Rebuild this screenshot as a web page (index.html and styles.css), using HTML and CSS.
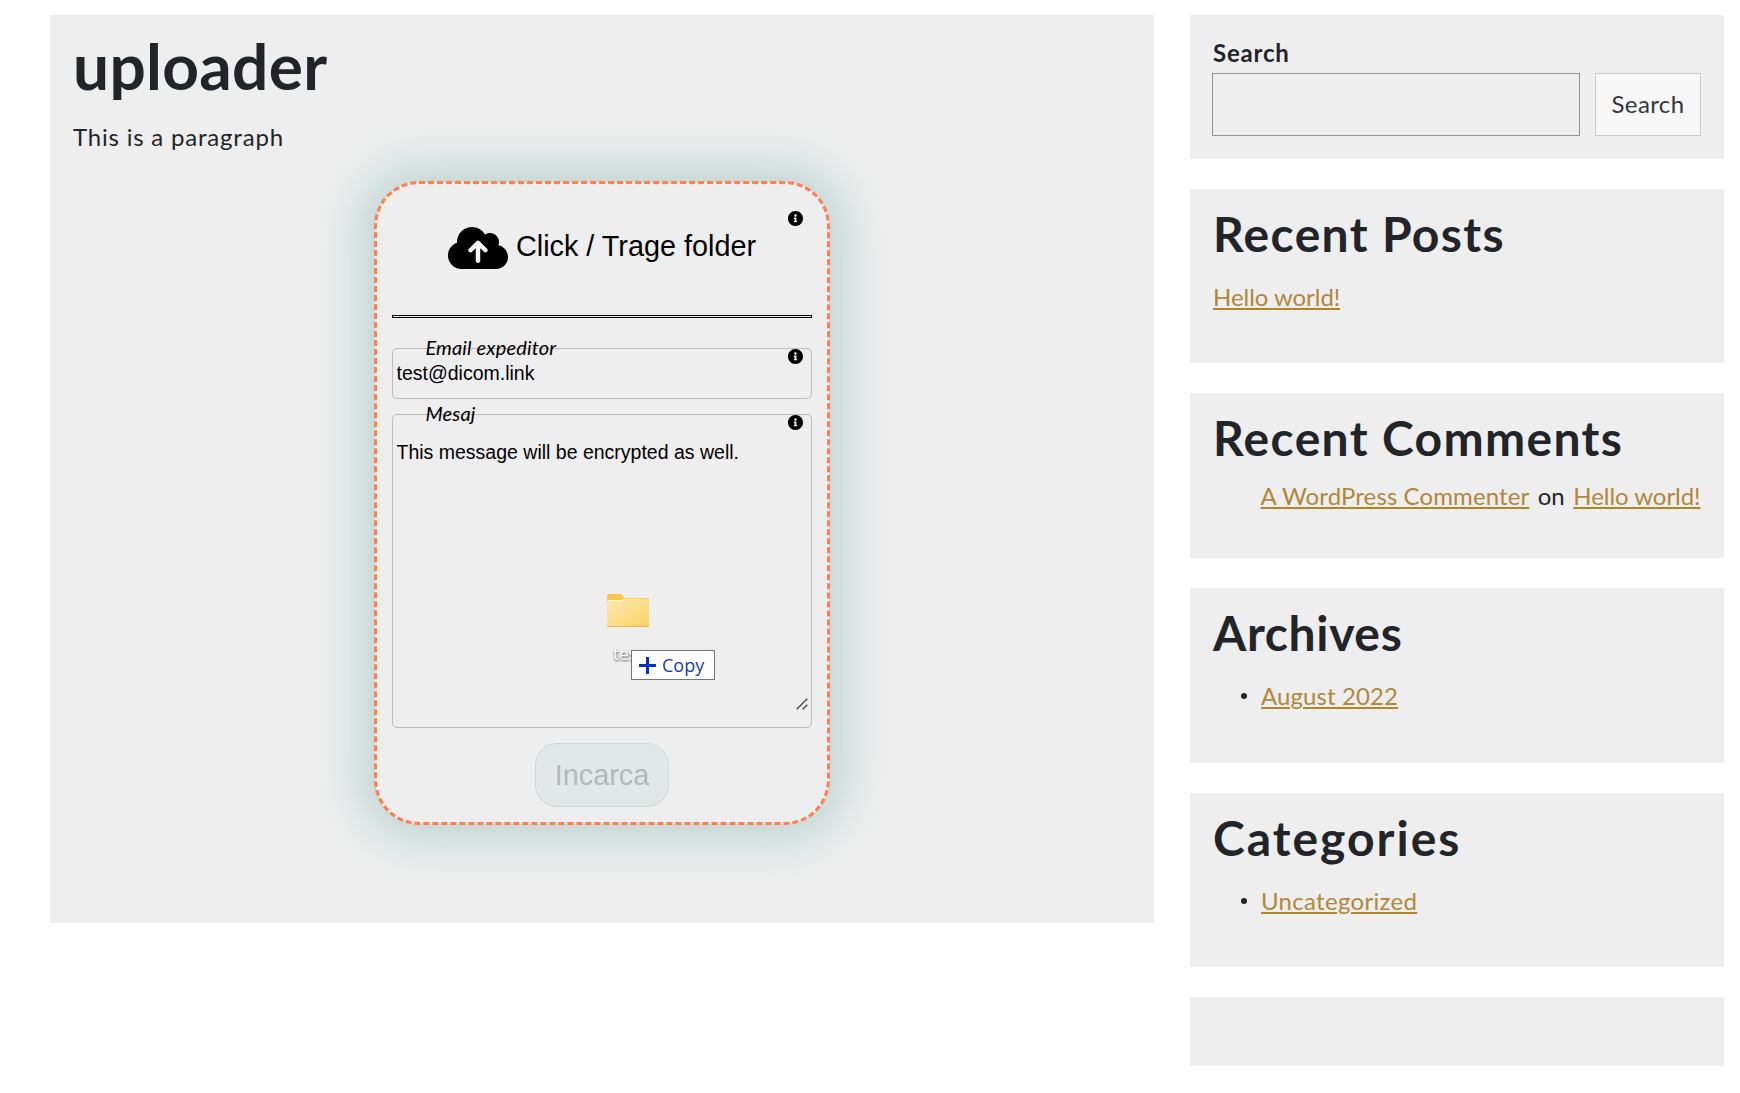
FILE: index.html
```html
<!DOCTYPE html>
<html lang="en">
<head>
<meta charset="utf-8">
<title>uploader</title>
<link rel="stylesheet" href="styles.css">
</head>
<body>
<svg width="0" height="0" class="sprite" aria-hidden="true">
  <symbol id="info" viewBox="8 8 496 496"><path d="M256 8C119.043 8 8 119.083 8 256c0 136.997 111.043 248 248 248s248-111.003 248-248C504 119.083 392.957 8 256 8zm0 110c23.196 0 42 18.804 42 42s-18.804 42-42 42-42-18.804-42-42 18.804-42 42-42zm56 254c0 6.627-5.373 12-12 12h-88c-6.627 0-12-5.373-12-12v-24c0-6.627 5.373-12 12-12h12v-64h-12c-6.627 0-12-5.373-12-12v-24c0-6.627 5.373-12 12-12h64c6.627 0 12 5.373 12 12v100h12c6.627 0 12 5.373 12 12v24z"/></symbol>
</svg>
<div class="page">
  <main class="panel content">
    <h1 class="title">uploader</h1>
    <p class="intro">This is a paragraph</p>

    <form class="uploader">
      <div class="drop">
        <svg class="cloud" viewBox="0 0 640 512"><path class="cloud-arrow" d="M200 160h240v260H200z"/><path d="M144 480C64.5 480 0 415.5 0 336c0-62.8 40.2-116.2 96.2-135.9c-.1-2.7-.2-5.4-.2-8.1c0-88.4 71.6-160 160-160c59.3 0 111 32.2 138.7 80.2C409.9 102 428.3 96 448 96c53 0 96 43 96 96c0 12.2-2.3 23.8-6.4 34.6C596 238.4 640 290.1 640 352c0 70.7-57.3 128-128 128H144zm79-217c-9.4 9.4-9.4 24.6 0 33.9s24.6 9.4 33.9 0l39-39V392c0 13.3 10.7 24 24 24s24-10.7 24-24V257.9l39 39c9.4 9.4 24.6 9.4 33.9 0s9.4-24.6 0-33.9l-80-80c-9.4-9.4-24.6-9.4-33.9 0l-80 80z"/></svg>
        <span class="drop-text">Click / Trage folder</span>
        <svg class="info info-drop"><use href="#info"/></svg>
      </div>
      <div class="rule"></div>
      <div class="field">
        <label class="field-label" for="email">Email expeditor</label>
        <svg class="info"><use href="#info"/></svg>
        <input class="email" id="email" type="text" value="test@dicom.link">
      </div>
      <div class="field">
        <label class="field-label" for="message">Mesaj</label>
        <svg class="info"><use href="#info"/></svg>
        <textarea class="message" id="message" spellcheck="false">This message will be encrypted as well.</textarea>
        <svg class="grip" viewBox="0 0 12 12"><path d="M.7 11.3L11.3.7M6.7 11.3l4.600-4.600"/></svg>
      </div>
      <button class="submit" type="button" disabled>Incarca</button>

      <div class="drag">
        <svg class="folder" viewBox="0 0 42 34">
          <defs><linearGradient id="fold" x1="0" y1="0" x2="1" y2="1"><stop offset="0" stop-color="#fce8b2"/><stop offset="1" stop-color="#fbd264"/></linearGradient></defs>
          <path fill="#f8c84e" d="M0 1q0-1 1-1h12.500q1 0 1.500.8L17 4h24q1 0 1 1v8H0z"/>
          <path fill="#fff" d="M1 6h13.500l2-1.300H17L15 8H1z"/>
          <path fill="url(#fold)" d="M0 7.200q0-.8 1-.8h13l2.800-1.600H42V32q0 1-1 1H1q-1 0-1-1z"/>
          <path fill="#eab649" d="M0 32h42q0 1-1 1H1q-1 0-1-1z"/>
        </svg>
        <span class="drag-name">test</span>
        <div class="tip">
          <svg class="plus" viewBox="0 0 17 17"><path d="M8.500 0v17M0 8.500h17"/></svg>
          <span>Copy</span>
        </div>
      </div>
    </form>
  </main>

  <aside class="sidebar">
    <section class="panel widget widget-search">
      <label class="search-label" for="q">Search</label>
      <div class="search-row">
        <input class="search-input" id="q" type="text">
        <button class="search-button" type="button">Search</button>
      </div>
    </section>
    <section class="panel widget">
      <h2 class="heading">Recent Posts</h2>
      <a class="link" href="#">Hello world!</a>
    </section>
    <section class="panel widget widget-comments">
      <h2 class="heading">Recent Comments</h2>
      <p class="comment"><a class="link author" href="#">A WordPress Commenter</a><span>on</span><a class="link" href="#">Hello world!</a></p>
    </section>
    <section class="panel widget widget-archives">
      <h2 class="heading heading-archives">Archives</h2>
      <ul class="list"><li><a class="link archive" href="#">August 2022</a></li></ul>
    </section>
    <section class="panel widget">
      <h2 class="heading heading-categories">Categories</h2>
      <ul class="list"><li><a class="link uncategorized" href="#">Uncategorized</a></li></ul>
    </section>
    <section class="panel widget widget-empty"></section>
  </aside>
</div>
</body>
</html>
```
FILE: styles.css
```css
* { box-sizing: border-box; }

body {
  margin: 0;
  background: #fff;
  color: #212529;
  font: 24px/36px Lato, "Open Sans", sans-serif;
}

h1, h2, p, ul { margin: 0; }

.sprite { position: absolute; }

.page {
  display: flex;
  align-items: flex-start;
  gap: 36px;
  padding: 15px 16px 0 50px;
  height: 1093px;
  overflow: hidden;
}

.panel { background: #eee; }

/* Main column */
.content {
  width: 1104px;
  height: 908px;
  padding: 14px 23px;
}

.title {
  font-size: 64px;
  line-height: 74px;
  letter-spacing: .3px;
  margin-bottom: 16px;
}

.intro { letter-spacing: .8px; }

.uploader {
  position: relative;
  display: flex;
  flex-direction: column;
  width: 456px;
  height: 644px;
  margin: 26px 0 0 301px;
  padding: 0 15px;
  border: 3px dashed coral;
  border-radius: 45px;
  background: #eee;
  background-clip: padding-box;
  box-shadow: 0 0 45px 16px #c0d5d4;
  color: #000;
  font-family: "Liberation Sans", Arial, sans-serif;
}

.drop {
  position: relative;
  display: flex;
  align-items: center;
  justify-content: center;
  gap: 8px;
  height: 131px;
}

.cloud { width: 60px; height: 48px; margin-top: -3px; }
.cloud-arrow { fill: #f6f6f6; }

.drop-text {
  font-size: 28.8px;
  margin-top: -8px;
}

.info {
  position: absolute;
  top: 0;
  right: 8px;
  width: 15px;
  height: 15px;
}

.info-drop { top: 27px; right: 9px; }

.rule {
  height: 3px;
  border: 1px solid #000;
  background: #eee;
  margin-bottom: 30px;
}

.field {
  position: relative;
  border: 1px solid #bcbcbc;
  border-radius: 5px;
  margin-bottom: 15px;
}

.field-label {
  position: absolute;
  left: 32.500px;
  top: -14px;
  font: italic 20px/24px Lato, sans-serif;
  letter-spacing: .15px;
}

.email, .message {
  display: block;
  width: 100%;
  margin: 0;
  border: 0;
  outline: 0;
  background: transparent;
  color: #000;
  font: 19.5px/24px "Liberation Sans", Arial, sans-serif;
}

.email { height: 49px; padding: 0 3.500px 1px; }

.message {
  height: 312px;
  padding: 25px 3.500px 0;
  resize: none;
  overflow: hidden;
}

.grip {
  position: absolute;
  right: 3px;
  bottom: 17px;
  width: 12px;
  height: 12px;
  fill: none;
  stroke: #444;
  stroke-width: 1.300;
}

.submit {
  align-self: center;
  width: 134px;
  height: 64px;
  padding: 0;
  border: 1px solid #cbdad9;
  border-radius: 22px;
  background: #e2e8e8;
  color: #b5b9b9;
  font: 28.8px "Liberation Sans", Arial, sans-serif;
}

/* Dragged folder, floating over the form */
.drag {
  position: absolute;
  left: 230px;
  top: 410px;
  width: 110px;
  height: 90px;
}

.folder { display: block; width: 42px; height: 34px; }

.drag-name {
  position: absolute;
  left: 6px;
  top: 48px;
  color: #fff;
  font: 17px/24px "Open Sans", sans-serif;
  text-shadow: 0 1px 2px #777, 1px 1px 2px #999;
}

.tip {
  position: absolute;
  left: 24px;
  top: 56px;
  display: flex;
  align-items: center;
  gap: 6px;
  width: 84px;
  height: 30px;
  padding-left: 7px;
  border: 1px solid #767676;
  background: #fff;
  color: #1639b5;
  font: 18px/28px "Open Sans", sans-serif;
}

.plus {
  width: 17px;
  height: 17px;
  fill: none;
  stroke: #0033c4;
  stroke-width: 3;
}

/* Sidebar */
.sidebar {
  display: flex;
  flex-direction: column;
  gap: 30px;
  width: 534px;
}

.widget { height: 174.300px; padding: 16px 23px 0; }
.widget-search { height: 144px; padding: 20px 23px 0 22px; }
.widget-comments { height: 165px; }
.widget-empty { height: 69px; }

.search-label {
  display: block;
  margin-bottom: 2px;
  padding-left: 1px;
  font-weight: bold;
  letter-spacing: .8px;
}

.search-row { display: flex; gap: 15px; }

.search-input {
  width: 368px;
  height: 63px;
  border: 1px solid #949494;
  background: transparent;
}

.search-button {
  width: 106px;
  height: 63px;
  padding: 0 0 3px;
  border: 1px solid #ccc;
  background: #f7f7f7;
  color: #32373c;
  font: 24px Lato, sans-serif;
  letter-spacing: .4px;
}

.heading {
  font-size: 48px;
  line-height: 58px;
  letter-spacing: 1.350px;
  margin-bottom: 16px;
}

.widget-comments .heading { margin-bottom: 11px; }
.heading-archives { letter-spacing: .65px; }
.heading-categories { letter-spacing: 2px; }

.link {
  color: #b1873b;
  letter-spacing: -.05px;
  text-decoration: underline;
  text-decoration-color: #b08627;
  text-decoration-thickness: 2px;
  text-underline-offset: 2px;
}

.comment {
  display: flex;
  gap: 8.500px;
  padding-left: 47.500px;
  white-space: nowrap;
}

.author { letter-spacing: .1px; }

.list { padding-left: 28px; list-style: none; }

.list li {
  display: flex;
  align-items: center;
  gap: 14px;
}

.list li::before {
  content: "";
  width: 6px;
  height: 6px;
  border-radius: 50%;
  background: #212529;
}

.archive { letter-spacing: .1px; }
.uncategorized { letter-spacing: .3px; }
```
